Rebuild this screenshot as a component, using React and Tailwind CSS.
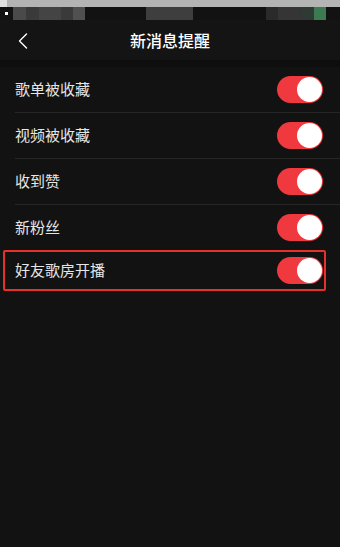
import { ChevronLeft } from "lucide-react";

const items = ["歌单被收藏", "视频被收藏", "收到赞", "新粉丝", "好友歌房开播"];

const Toggle = () => (
  <div className="w-[46px] h-[27px] rounded-full bg-[#f0393f] flex items-center justify-end pr-[1px]">
    <div className="w-[25px] h-[25px] rounded-full bg-white" />
  </div>
);

export default function App() {
  return (
    <div
      className="w-[340px] h-[547px] bg-[#121212] overflow-hidden flex flex-col"
      style={{ fontFamily: '"Noto Sans CJK SC", "Noto Sans", sans-serif' }}
    >
      {/* blurred status bar */}
      <div className="h-[7px] flex">
        <div className="w-[7px] bg-[#e0e0e0]" />
        <div className="flex-1 bg-[#b4b4b4]" />
      </div>
      <div className="h-[13px] flex items-stretch">
        <div className="w-[13px] flex items-center pl-[5px]">
          <div className="w-[3px] h-[3px] bg-white" />
        </div>
        <div className="w-[13px] bg-[#4a4a4a]" />
        <div className="w-[13px] bg-[#3a3a3a]" />
        <div className="w-[22px] bg-[#444444]" />
        <div className="w-[12px] bg-[#3a3a3a]" />
        <div className="w-[12px] bg-[#505050]" />
        <div className="w-[61px]" />
        <div className="w-[47px] bg-[#3e3e3e]" />
        <div className="w-[73px]" />
        <div className="w-[12px] bg-[#2a2a2a]" />
        <div className="w-[24px] bg-[#353535]" />
        <div className="w-[12px] bg-[#2e3a33]" />
        <div className="w-[12px] bg-[#3d7a52]" />
      </div>

      {/* nav bar */}
      <div className="h-[40px] relative flex items-center justify-center bg-[#141414]">
        <ChevronLeft
          className="absolute left-[9px] top-[7px] text-white"
          size={28}
          strokeWidth={1.2}
        />
        <span className="text-white text-[16px] font-medium">新消息提醒</span>
      </div>
      <div className="h-[7px] bg-[#0e0e0e]" />

      {/* list */}
      <div className="flex flex-col">
        {items.map((label, i) => {
          const last = i === items.length - 1;
          return (
            <div key={label}>
              <div
                className={
                  last
                    ? "ml-[3px] w-[323px] h-[41px] border-2 border-[#e5312a] rounded-[2px] flex items-center justify-between pl-[10px] pr-px"
                    : "h-[45px] flex items-center justify-between pl-[15px] pr-[17px]"
                }
              >
                <span className="text-[15px] text-[#e6e6e6]">{label}</span>
                <Toggle />
              </div>
              {i < items.length - 2 && <div className="ml-[15px] h-px bg-[#262626]" />}
            </div>
          );
        })}
      </div>
    </div>
  );
}
